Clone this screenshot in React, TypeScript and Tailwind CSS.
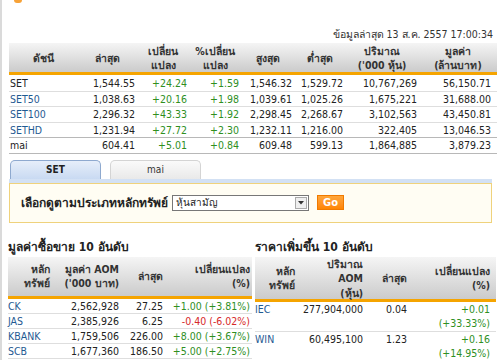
import React from 'react';

type IndexRow = {
  name: string;
  link: boolean;
  last: string;
  chg: string;
  pct: string;
  high: string;
  low: string;
  vol: string;
  val: string;
};

const indexRows: IndexRow[] = [
  { name: 'SET', link: false, last: '1,544.55', chg: '+24.24', pct: '+1.59', high: '1,546.32', low: '1,529.72', vol: '10,767,269', val: '56,150.71' },
  { name: 'SET50', link: true, last: '1,038.63', chg: '+20.16', pct: '+1.98', high: '1,039.61', low: '1,025.26', vol: '1,675,221', val: '31,688.00' },
  { name: 'SET100', link: true, last: '2,296.32', chg: '+43.33', pct: '+1.92', high: '2,298.45', low: '2,268.67', vol: '3,102,563', val: '43,450.81' },
  { name: 'SETHD', link: true, last: '1,231.94', chg: '+27.72', pct: '+2.30', high: '1,232.11', low: '1,216.00', vol: '322,405', val: '13,046.53' },
  { name: 'mai', link: false, last: '604.41', chg: '+5.01', pct: '+0.84', high: '609.48', low: '599.13', vol: '1,864,885', val: '3,879.23' },
];

const topValue = [
  { name: 'CK', val: '2,562,928', last: '27.25', chg: '+1.00 (+3.81%)', up: true },
  { name: 'JAS', val: '2,385,926', last: '6.25', chg: '-0.40 (-6.02%)', up: false },
  { name: 'KBANK', val: '1,759,506', last: '226.00', chg: '+8.00 (+3.67%)', up: true },
  { name: 'SCB', val: '1,677,360', last: '186.50', chg: '+5.00 (+2.75%)', up: true },
];

const topGain = [
  { name: 'IEC', vol: '277,904,000', last: '0.04', chg: '+0.01', pct: '(+33.33%)' },
  { name: 'WIN', vol: '60,495,100', last: '1.23', chg: '+0.16', pct: '(+14.95%)' },
];

const mainCols = 'grid grid-cols-[69px_59px_52px_52px_53px_51px_74px_78px]';
const leftCols = 'grid grid-cols-[42px_71px_44px_87px]';
const rightCols = 'grid grid-cols-[40px_70px_44px_87px]';

export default function App() {
  return (
    <div className="w-[500px] h-[360px] overflow-hidden bg-white border-l-2 border-[#dadada] font-['DejaVu_Sans_Condensed','Liberation_Sans',sans-serif] text-[10.5px] text-[#222]">
      {/* cut-off logo at the very top */}
      <div className="h-[3px] pl-[12px]">
        <div className="w-[8px] h-[3px] bg-[#f7a238] rounded-b-full" />
      </div>

      <div className="pt-[24px] pr-[7px] text-right leading-[14px] text-[#333]">
        ข้อมูลล่าสุด 13 ส.ค. 2557 17:00:34
      </div>

      {/* index table */}
      <div className="ml-[7px] mt-[2px] w-[488px]">
        <div className={`${mainCols} h-[32px] bg-gradient-to-b from-[#f5f5f5] to-[#cbcbcb] border-b-[3px] border-[#f5a400] font-bold text-[#333] leading-[14px] text-center`}>
          <div className="flex items-center justify-center">ดัชนี</div>
          <div className="flex items-center justify-center">ล่าสุด</div>
          <div className="flex items-center justify-center">เปลี่ยน<br />แปลง</div>
          <div className="flex items-center justify-center">%เปลี่ยน<br />แปลง</div>
          <div className="flex items-center justify-center">สูงสุด</div>
          <div className="flex items-center justify-center">ต่ำสุด</div>
          <div className="flex items-center justify-center">ปริมาณ<br />('000 หุ้น)</div>
          <div className="flex items-center justify-center">มูลค่า<br />(ล้านบาท)</div>
        </div>
        <div className="pt-[1px]">
          {indexRows.map((r, i) => (
            <div
              key={r.name}
              className={`${mainCols} leading-[14.5px] border-b ${i >= 3 ? 'border-[#b8b8b8]' : 'border-[#dedede]'}`}
            >
              <div className={`pl-[1px] ${r.link ? 'text-[#1f5a92]' : ''}`}>{r.name}</div>
              <div className="text-right pr-[2px]">{r.last}</div>
              <div className="text-right pr-[2px] text-[#2f8f1f]">{r.chg}</div>
              <div className="text-right pr-[2px] text-[#2f8f1f]">{r.pct}</div>
              <div className="text-right pr-[2px]">{r.high}</div>
              <div className="text-right pr-[2px]">{r.low}</div>
              <div className="text-right pr-[2px]">{r.vol}</div>
              <div className="text-right pr-[6px]">{r.val}</div>
            </div>
          ))}
        </div>
      </div>

      {/* tabs + filter */}
      <div className="ml-[7px] mt-[6px] w-[483px]">
        <div className="flex items-end h-[19px] pl-[1px] text-[10px]">
          <div className="w-[91px] h-[19px] flex items-center justify-center font-bold rounded-t-[5px] border border-b-0 border-[#8ea9cf] bg-gradient-to-b from-[#e6eefa] to-[#c9daf2]">
            SET
          </div>
          <div className="ml-[9px] w-[91px] h-[19px] flex items-center justify-center rounded-t-[5px] border border-b-0 border-[#d4d4d4] bg-gradient-to-b from-[#fafafa] to-[#e9e9e9] text-[#333]">
            mai
          </div>
        </div>
        <div className="h-[4px] bg-[#d3e1f4]" />
        <div className="h-[40px] border border-[#efd27c] bg-[#fffdf3] flex items-center pl-[11px]">
          <span className="font-bold text-[12px] text-[#222]">เลือกดูตามประเภทหลักทรัพย์</span>
          <div className="ml-[4px] w-[137px] h-[16px] border border-[#777] bg-white flex">
            <div className="flex-1 pl-[3px] text-[10px] leading-[14px]">หุ้นสามัญ</div>
            <div className="w-[12px] my-[1px] mr-[1px] border border-[#aaa] bg-[#efefef] flex items-center justify-center">
              <svg width="6" height="4" viewBox="0 0 6 4">
                <path d="M0 0 L6 0 L3 3.5 Z" fill="#333" />
              </svg>
            </div>
          </div>
          <div className="ml-[8px] w-[27px] h-[15px] bg-gradient-to-b from-[#ffa63a] to-[#ff8500] border border-[#f07a00] text-white font-bold text-[11px] leading-[13px] text-center">
            Go
          </div>
        </div>
      </div>

      {/* top 10 tables */}
      <div className="flex mt-[16px] ml-[6px]">
        <div className="w-[244px]">
          <div className="font-bold text-[12px] leading-[16px] text-[#222]">มูลค่าซื้อขาย 10 อันดับ</div>
          <div className={`${leftCols} mt-[2px] h-[42px] bg-gradient-to-b from-[#f5f5f5] to-[#cbcbcb] border-b-[3px] border-[#f5a400] font-bold text-[#333] leading-[14.5px] text-right`}>
            <div className="flex items-center justify-end">หลัก<br />ทรัพย์</div>
            <div className="flex items-center justify-end pr-[2px]">มูลค่า AOM<br />('000 บาท)</div>
            <div className="flex items-center justify-end pr-[2px]">ล่าสุด</div>
            <div className="flex items-center justify-end pr-[2px]">เปลี่ยนแปลง<br />(%)</div>
          </div>
          {topValue.map((r) => (
            <div key={r.name} className={`${leftCols} leading-[14px] border-b border-[#dedede]`}>
              <div className="text-[#1f5a92]">{r.name}</div>
              <div className="text-right pr-[2px]">{r.val}</div>
              <div className="text-right pr-[2px]">{r.last}</div>
              <div className={`text-right pr-[2px] whitespace-nowrap ${r.up ? 'text-[#2f8f1f]' : 'text-[#d62828]'}`}>{r.chg}</div>
            </div>
          ))}
        </div>

        <div className="w-[241px] ml-[3px]">
          <div className="font-bold text-[12px] leading-[16px] text-[#222]">ราคาเพิ่มขึ้น 10 อันดับ</div>
          <div className={`${rightCols} mt-[2px] h-[45px] bg-gradient-to-b from-[#f5f5f5] to-[#cbcbcb] border-b-[3px] border-[#f5a400] font-bold text-[#333] leading-[14.5px] text-right`}>
            <div className="flex items-center justify-end">หลัก<br />ทรัพย์</div>
            <div className="flex items-center justify-end pr-[2px]">ปริมาณ<br />AOM<br />(หุ้น)</div>
            <div className="flex items-center justify-end pr-[2px]">ล่าสุด</div>
            <div className="flex items-center justify-end pr-[6px]">เปลี่ยนแปลง<br />(%)</div>
          </div>
          {topGain.map((r) => (
            <div key={r.name} className={`${rightCols} leading-[14.5px] border-b border-[#dedede]`}>
              <div className="text-[#1f5a92]">{r.name}</div>
              <div className="text-right pr-[2px]">{r.vol}</div>
              <div className="text-right pr-[2px]">{r.last}</div>
              <div className="text-right pr-[6px] text-[#2f8f1f]">
                <div>{r.chg}</div>
                <div>{r.pct}</div>
              </div>
            </div>
          ))}
        </div>
      </div>
    </div>
  );
}
